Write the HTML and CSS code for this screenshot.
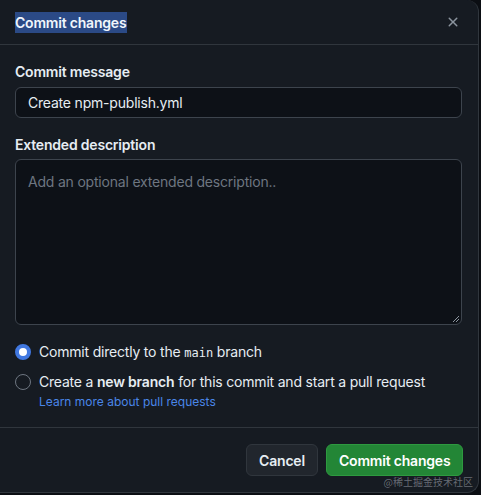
FILE: index.html
```html
<!DOCTYPE html>
<html>
<head>
<meta charset="utf-8">
<link rel="stylesheet" href="styles.css">
</head>
<body>
<div class="dialog">
  <div class="header">
    <h1 class="title"><span class="sel">Commit changes</span></h1>
    <button class="close" aria-label="Close">
      <svg width="16" height="16" viewBox="0 0 16 16"><path d="M3.72 3.72a.75.75 0 0 1 1.06 0L8 6.94l3.22-3.22a.75.75 0 1 1 1.06 1.06L9.06 8l3.22 3.22a.75.75 0 1 1-1.06 1.06L8 9.06l-3.22 3.22a.75.75 0 0 1-1.06-1.06L6.94 8 3.72 4.78a.75.75 0 0 1 0-1.06Z" fill="currentColor"/></svg>
    </button>
  </div>
  <div class="body">
    <label class="label">Commit message</label>
    <div class="input">Create npm-publish.yml</div>
    <label class="label label2">Extended description</label>
    <div class="textarea">
      <span class="placeholder">Add an optional extended description..</span>
      <svg class="grip" width="10" height="10" viewBox="0 0 10 10"><path d="M9 3 3 9M9 6 6 9" stroke="#8b949e" stroke-width="1"/></svg>
    </div>
    <div class="radios">
      <div class="radio-row">
        <span class="radio checked"></span>
        <span class="rtext">Commit directly to the <code>main</code> branch</span>
      </div>
      <div class="radio-row">
        <span class="radio"></span>
        <div class="rcol">
          <span class="rtext">Create a <b>new branch</b> for this commit and start a pull request</span>
          <a class="link">Learn more about pull requests</a>
        </div>
      </div>
    </div>
  </div>
  <div class="footer">
    <button class="btn cancel">Cancel</button>
    <button class="btn primary">Commit changes</button>
  </div>
  <span class="watermark">@稀土掘金技术社区</span>
</div>
</body>
</html>
```
FILE: styles.css
```css
* { box-sizing: border-box; }
html, body { margin: 0; padding: 0; }
body {
  background: #0b0e13;
  width: 481px;
  height: 495px;
  overflow: hidden;
  font-family: Inter, "Liberation Sans", "Noto Sans CJK SC", sans-serif;
  color: #e6edf3;
  font-size: 14px;
  letter-spacing: -0.2px;
}
.dialog {
  position: relative;
  width: 479px;
  height: 493px;
  background: #161b22;
  border-right: 1px solid #30363d;
  border-bottom: 1px solid #30363d;
  border-radius: 0 12px 12px 0;
  display: flex;
  flex-direction: column;
}
.header {
  height: 45px;
  border-bottom: 1px solid #30363d;
  display: flex;
  align-items: center;
  justify-content: space-between;
  padding: 0 15px 0 15px;
}
.title {
  margin: 0;
  font-size: 14px;
  font-weight: 600;
  line-height: 21px;
}
.sel {
  background: #2b4a86;
  color: #f0f6fc;
  display: inline-block;
  padding: 0 1px 0 0;
}
.close {
  background: none;
  border: 0;
  color: #8b949e;
  padding: 0;
  width: 16px;
  height: 16px;
  display: flex;
  margin-right: 2px;
}
.body {
  padding: 17px 16px 0 15px;
  display: flex;
  flex-direction: column;
  flex: 1;
}
.label {
  font-weight: 600;
  font-size: 14px;
  line-height: 20px;
  color: #e6edf3;
}
.label2 { margin-top: 17px; }
.input {
  margin-top: 5px;
  height: 31px;
  border: 1px solid #3d444d;
  border-radius: 6px;
  background: #0d1117;
  padding: 0 12px;
  display: flex;
  align-items: center;
  font-size: 14px;
}
.textarea {
  position: relative;
  margin-top: 4px;
  height: 166px;
  border: 1px solid #3d444d;
  border-radius: 6px;
  background: #0d1117;
  padding: 13px 12px;
}
.placeholder { color: #6e7681; font-size: 14px; }
.grip { position: absolute; right: 1px; bottom: 1px; }
.radios {
  margin-top: 17px;
  display: flex;
  flex-direction: column;
  gap: 9px;
}
.radio-row {
  display: flex;
  align-items: flex-start;
  gap: 8px;
}
.radio {
  width: 16px;
  height: 16px;
  border-radius: 50%;
  border: 1px solid #6e7681;
  flex: none;
  margin-top: 2px;
}
.radio.checked {
  border: 4px solid #4178e0;
  background: #fff;
}
.rtext { font-size: 14px; line-height: 20px; white-space: nowrap; }
.rtext b { font-weight: 600; }
code {
  font-family: "DejaVu Sans Mono", "Liberation Mono", monospace;
  font-size: 12px;
  letter-spacing: 0;
}
.rcol { display: flex; flex-direction: column; }
.link {
  color: #4a86e8;
  font-size: 12px;
  line-height: 19px;
  letter-spacing: 0;
}
.footer {
  height: 65px;
  border-top: 1px solid #30363d;
  display: flex;
  align-items: center;
  justify-content: flex-end;
  gap: 8px;
  padding: 0 15px 0;
}
.btn {
  height: 32px;
  border-radius: 6px;
  border: 1px solid #30363d;
  background: #21262d;
  color: #e6edf3;
  font-family: inherit;
  font-size: 14px;
  font-weight: 600;
  letter-spacing: -0.2px;
  padding: 0 12px;
  white-space: nowrap;
}
.btn.cancel { width: 72px; }
.btn.primary {
  background: #238636;
  border-color: #2e9a40;
  color: #fff;
  width: 137px;
}
.watermark {
  position: absolute;
  right: 5px;
  bottom: 3px;
  font-size: 10px;
  letter-spacing: 0;
  color: rgba(200, 205, 215, 0.45);
  font-family: "Noto Sans CJK SC", sans-serif;
}
```
